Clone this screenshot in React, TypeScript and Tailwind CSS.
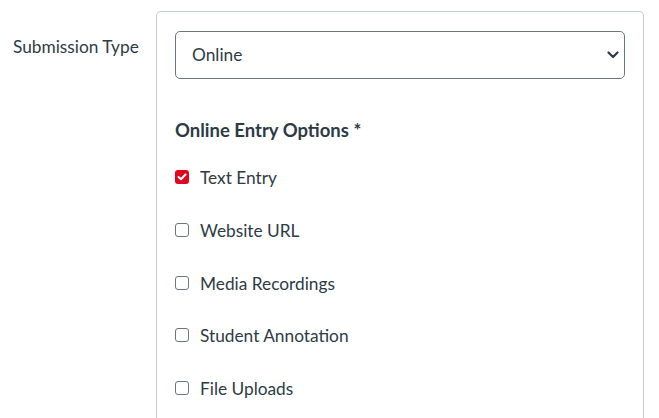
import React, { useState } from 'react';

const OPTIONS = ['Text Entry', 'Website URL', 'Media Recordings', 'Student Annotation', 'File Uploads'];

export default function App() {
  const [checked, setChecked] = useState<Record<string, boolean>>({ 'Text Entry': true });

  return (
    <div className="h-[418px] w-[659px] overflow-hidden bg-white font-['Lato',sans-serif] text-[#2d3b45]">
      <div className="flex pt-[11px]">
        {/* Label column */}
        <div className="w-[156px] shrink-0 pl-[13px] pt-[24px] text-[17.3px] leading-6">
          Submission Type
        </div>

        {/* Settings panel */}
        <div className="h-[420px] w-[488px] rounded-t-[5px] border border-b-0 border-[#c7cdd1] px-[18px] pt-[19px]">
          <div className="relative">
            <select
              defaultValue="online"
              className="h-[48px] w-full appearance-none rounded-[5px] border border-[#6b7780] bg-white pl-[16px] text-[17.3px] text-[#2d3b45] outline-none"
            >
              <option value="online">Online</option>
            </select>
            <svg
              className="pointer-events-none absolute right-[6px] top-[20px]"
              width="12"
              height="8"
              viewBox="0 0 12 8"
            >
              <path d="M1.5 1.5 L6 6 L10.5 1.5" fill="none" stroke="#2d3b45" strokeWidth="2.2" strokeLinecap="round" strokeLinejoin="round" />
            </svg>
          </div>

          <div className="mt-[39px] text-[18.5px] font-bold leading-6">Online Entry Options *</div>

          <div className="mt-[27px] flex flex-col">
            {OPTIONS.map((opt) => {
              const on = !!checked[opt];
              return (
                <label key={opt} className="flex h-[52.75px] cursor-pointer items-start gap-[11px]">
                  <span
                    onClick={() => setChecked((c) => ({ ...c, [opt]: !c[opt] }))}
                    className={
                      on
                        ? 'mt-[1px] flex h-[14px] w-[14px] shrink-0 items-center justify-center rounded-[3px] bg-[#e0061f]'
                        : 'mt-[1px] h-[14px] w-[14px] shrink-0 rounded-[3px] border-[1.5px] border-[#6b7780] bg-white'
                    }
                  >
                    {on && (
                      <svg width="10" height="8" viewBox="0 0 10 8">
                        <path d="M1.5 4 L4 6.3 L8.5 1.5" fill="none" stroke="#fff" strokeWidth="2" strokeLinecap="round" strokeLinejoin="round" />
                      </svg>
                    )}
                  </span>
                  <span className="-mt-[1px] text-[17.3px] leading-5">{opt}</span>
                </label>
              );
            })}
          </div>
        </div>
      </div>
    </div>
  );
}
